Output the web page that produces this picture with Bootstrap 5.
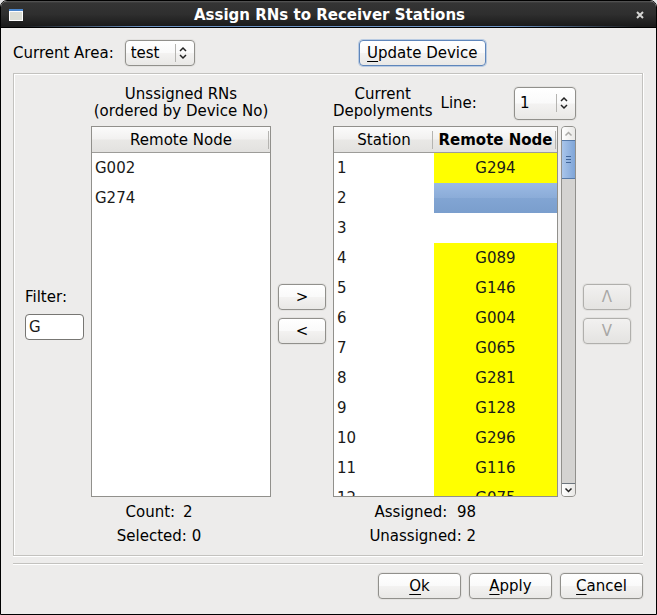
<!DOCTYPE html>
<html lang="en">
<head>
<meta charset="utf-8">
<meta name="viewport" content="width=device-width, initial-scale=1">
<title>Assign RNs to Receiver Stations</title>
<link href="https://cdn.jsdelivr.net/npm/bootstrap@5.3.0/dist/css/bootstrap.min.css" rel="stylesheet">
<style>
  :root { --face: #edeceb; --edge: #91908c; }
  body { font-family: "DejaVu Sans", sans-serif; font-size: 15px; line-height: 18px; color: #000; background: #e4e4e6; }
  .window { background: var(--face); border: 1px solid #000; border-radius: 7px 7px 0 0; min-height: 500px; overflow: hidden; }
  .titlebar { height: 27px; padding-top: 2px; background: linear-gradient(#5a5a5a 0, #343434 2px, #2f2f2f 50%, #191919 100%); color: #fff; border-bottom: 1px solid #000; position: relative; }
  .titlebar::after { content: ""; position: absolute; left: 0; right: 0; bottom: 0; height: 1px; background: linear-gradient(90deg, #1c1c1c 3%, #6d93c4 22%, #6d93c4 78%, #1c1c1c 97%); }
  .titlebar h1 { font-size: 15px; line-height: 18px; font-weight: 700; }
  .tool { line-height: 18px; font-size: 15px; border: 1px solid var(--edge); border-radius: 4px; color: #000; padding: 3px 7px; min-height: 26px;
    background: linear-gradient(#fff 0, #fafafa 48%, #f3f2f1 52%, #e9e8e6 100%); box-shadow: 0 0 0 1px #e3e2e0; }
  .tool:hover { background: #fff; border-color: #5f86bb; color: #000; }
  .tool.focused { border-color: #5f86bb; box-shadow: 0 0 0 1px #b9cbe2; }
  .tool:disabled { color: #a8a7a5; opacity: 1; border-color: #b0afac; background: linear-gradient(#f2f1f0, #e4e3e1); }
  .tool u { text-underline-offset: 3px; text-decoration-thickness: 1px; }
  .combo { width: 70px; padding: 3px 24px 3px 5px; cursor: default;
    background: url("data:image/svg+xml,%3Csvg xmlns='http://www.w3.org/2000/svg' width='20' height='26'%3E%3Cpath d='M1.5 4v18' stroke='%23b5b4b1'/%3E%3Cpath d='M6 11l3-3 3 3M6 15l3 3 3-3' fill='none' stroke='%23222' stroke-width='1.5'/%3E%3C/svg%3E") no-repeat right 0 center,
      linear-gradient(#fff 0, #fafafa 48%, #f3f2f1 52%, #e9e8e6 100%); }
  .combo-line { width: 62px; min-height: 33px; }
  .area-label { margin-right: 11px; }
  .client { padding: 12px 13px 15px 12px; }
  .etched { border: 1px solid #c3c2bf; box-shadow: inset 1px 1px #fff, 0 1px #fff, 1px 0 #fff; padding: 12px 11px 10px; gap: 7px; margin-top: 7px; }
  .rule { border-top: 1px solid #c3c2bf; border-bottom: 1px solid #fff; height: 2px; margin: 7px 0 8px; }
  .side { width: 48px; gap: 8px; padding-bottom: 3px; }
  .filter { width: 59px; gap: 8px; padding-bottom: 3px; }
  .entry { border: 1px solid #777673; border-radius: 4px; padding: 3px; font-size: 15px; line-height: 18px; min-height: 26px; color: #1a1a1a; }
  .pane-left { flex: 180 1 0; min-width: 0; }
  .pane-right { flex: 243 1 0; min-width: 0; }
  .caption { line-height: 17px; min-height: 34px; margin-bottom: 6px; }
  .viewport { background: #fff; border: 1px solid var(--edge); overflow: hidden; min-height: 0; flex-basis: 0; }
  .grid { width: 100%; table-layout: fixed; border-collapse: separate; border-spacing: 0; color: #1a1a1a; }
  .grid th { height: 26px; padding: 0; font-weight: 400; text-align: center; color: #000; border-bottom: 1px solid #9d9c99; white-space: nowrap;
    background: linear-gradient(#b5b4b1, #b5b4b1) no-repeat right 1px center / 1px 18px, linear-gradient(#fbfbfb 0, #f2f1f0 48%, #e9e8e6 52%, #e2e1df 100%); }
  .grid th.active { font-weight: 700; }
  .grid td { height: 30px; padding: 0 3px; }
  .grid .station { width: 100px; }
  .grid .node { text-align: center; }
  .grid .used { background: #ff0; }
  .grid .picked { background: linear-gradient(#9bbae4 0, #8bacd8 50%, #82a5d3 50%, #7a9ecd 100%); }
  .scroll { width: 15px; border: 1px solid var(--edge); border-radius: 4px; background: #d4d3d1; overflow: hidden; margin-left: 3px; }
  .scroll button { border: 0; padding: 0; height: 13px; line-height: 0; background: linear-gradient(90deg, #fff, #e9e8e6); }
  .thumb { height: 39px; border: 1px solid #5579a8; border-width: 1px 0; background: linear-gradient(90deg, #a9c5ea, #7fa5d8); }
  .counts { padding-top: 6px; row-gap: 6px; }
  .counts-left { padding-right: 44px; }
  .counts-right { padding-right: 100px; }
  .actions { gap: 8px; }
  .actions .tool { width: 83px; }
</style>
</head>
<body>
<main class="window d-flex flex-column vh-100">
  <header class="titlebar d-flex align-items-center px-2 flex-shrink-0">
    <svg width="14" height="12" viewBox="0 0 14 12" aria-hidden="true"><path fill="#fff" d="M0 0h14v12H0z"/><path fill="#dcded6" d="M1 3h12v8H1z"/><path fill="#4b86cc" d="M0 0h14v2H0z"/></svg>
    <h1 class="m-0 flex-fill text-center">Assign RNs to Receiver Stations</h1>
    <button type="button" class="border-0 bg-transparent p-0 d-flex me-1" aria-label="Close"><svg width="8" height="8" viewBox="0 0 8 8"><path d="M1 1l6 6M7 1l-6 6" stroke="#d6d6d4" stroke-width="2"/></svg></button>
  </header>

  <form class="client flex-fill d-flex flex-column">
    <div class="row g-0 align-items-center">
      <div class="col d-flex align-items-center">
        <label for="area" class="area-label">Current Area:</label>
        <select id="area" class="form-select tool combo"><option>test</option></select>
      </div>
      <div class="col-auto"><button type="button" class="btn tool focused"><u>U</u>pdate Device</button></div>
      <div class="col-3"></div>
    </div>

    <section class="etched flex-fill d-flex">
      <div class="filter d-flex flex-column justify-content-center flex-shrink-0">
        <label for="filter">Filter:</label>
        <input id="filter" type="text" class="form-control entry" value="G">
      </div>

      <div class="pane-left d-flex flex-column">
        <div class="caption text-center text-nowrap">Unssigned RNs<br>(ordered by Device No)</div>
        <div class="viewport flex-grow-1">
          <table class="grid">
            <thead><tr><th>Remote Node</th></tr></thead>
            <tbody><tr><td>G002</td></tr><tr><td>G274</td></tr></tbody>
          </table>
        </div>
        <div class="counts counts-left d-grid text-center">
          <div>Count:&nbsp;&#8202;&#8202;2</div>
          <div>Selected: 0</div>
        </div>
      </div>

      <div class="side d-flex flex-column justify-content-center flex-shrink-0">
        <button type="button" class="btn tool">&gt;</button>
        <button type="button" class="btn tool">&lt;</button>
      </div>

      <div class="pane-right d-flex flex-column">
        <div class="caption d-flex align-items-center">
          <div class="text-center">Current<br>Depolyments</div>
          <label for="line" class="ms-2">Line:</label>
          <select id="line" class="form-select tool combo combo-line ms-auto"><option>1</option></select>
        </div>
        <div class="d-flex flex-grow-1">
          <div class="viewport flex-grow-1 d-flex">
            <div class="w-100 overflow-hidden position-relative">
              <table class="grid position-absolute">
                <thead><tr><th class="station">Station</th><th class="active">Remote Node</th></tr></thead>
                <tbody>
                  <tr><td>1</td><td class="node used">G294</td></tr>
                  <tr><td>2</td><td class="node picked"></td></tr>
                  <tr><td>3</td><td class="node"></td></tr>
                  <tr><td>4</td><td class="node used">G089</td></tr>
                  <tr><td>5</td><td class="node used">G146</td></tr>
                  <tr><td>6</td><td class="node used">G004</td></tr>
                  <tr><td>7</td><td class="node used">G065</td></tr>
                  <tr><td>8</td><td class="node used">G281</td></tr>
                  <tr><td>9</td><td class="node used">G128</td></tr>
                  <tr><td>10</td><td class="node used">G296</td></tr>
                  <tr><td>11</td><td class="node used">G116</td></tr>
                  <tr><td>12</td><td class="node used">G075</td></tr>
                </tbody>
              </table>
            </div>
          </div>
          <div class="scroll d-flex flex-column flex-shrink-0">
            <button type="button" aria-label="Scroll up"><svg width="9" height="6" viewBox="0 0 9 6"><path d="M1.5 4.5l3-3 3 3" fill="none" stroke="#aaa9a6" stroke-width="1.5"/></svg></button>
            <div class="thumb d-flex align-items-center justify-content-center"><svg width="5" height="8" viewBox="0 0 5 8"><path d="M0 .5h5M0 3.5h5M0 6.5h5" stroke="#41669a"/></svg></div>
            <button type="button" class="mt-auto border-top border-secondary" aria-label="Scroll down"><svg width="9" height="6" viewBox="0 0 9 6"><path d="M1.5 1.5l3 3 3-3" fill="none" stroke="#222" stroke-width="1.5"/></svg></button>
          </div>
        </div>
        <div class="counts counts-right d-grid text-end">
          <div>Assigned:&nbsp; 98</div>
          <div>Unassigned: 2</div>
        </div>
      </div>

      <div class="side d-flex flex-column justify-content-center flex-shrink-0">
        <button type="button" class="btn tool" disabled>Λ</button>
        <button type="button" class="btn tool" disabled>V</button>
      </div>
    </section>

    <div class="rule" role="separator"></div>
    <footer class="actions d-flex justify-content-end">
      <button type="button" class="btn tool"><u>O</u>k</button>
      <button type="button" class="btn tool"><u>A</u>pply</button>
      <button type="button" class="btn tool"><u>C</u>ancel</button>
    </footer>
  </form>
</main>
<script src="https://cdn.jsdelivr.net/npm/bootstrap@5.3.0/dist/js/bootstrap.bundle.min.js"></script>
</body>
</html>
